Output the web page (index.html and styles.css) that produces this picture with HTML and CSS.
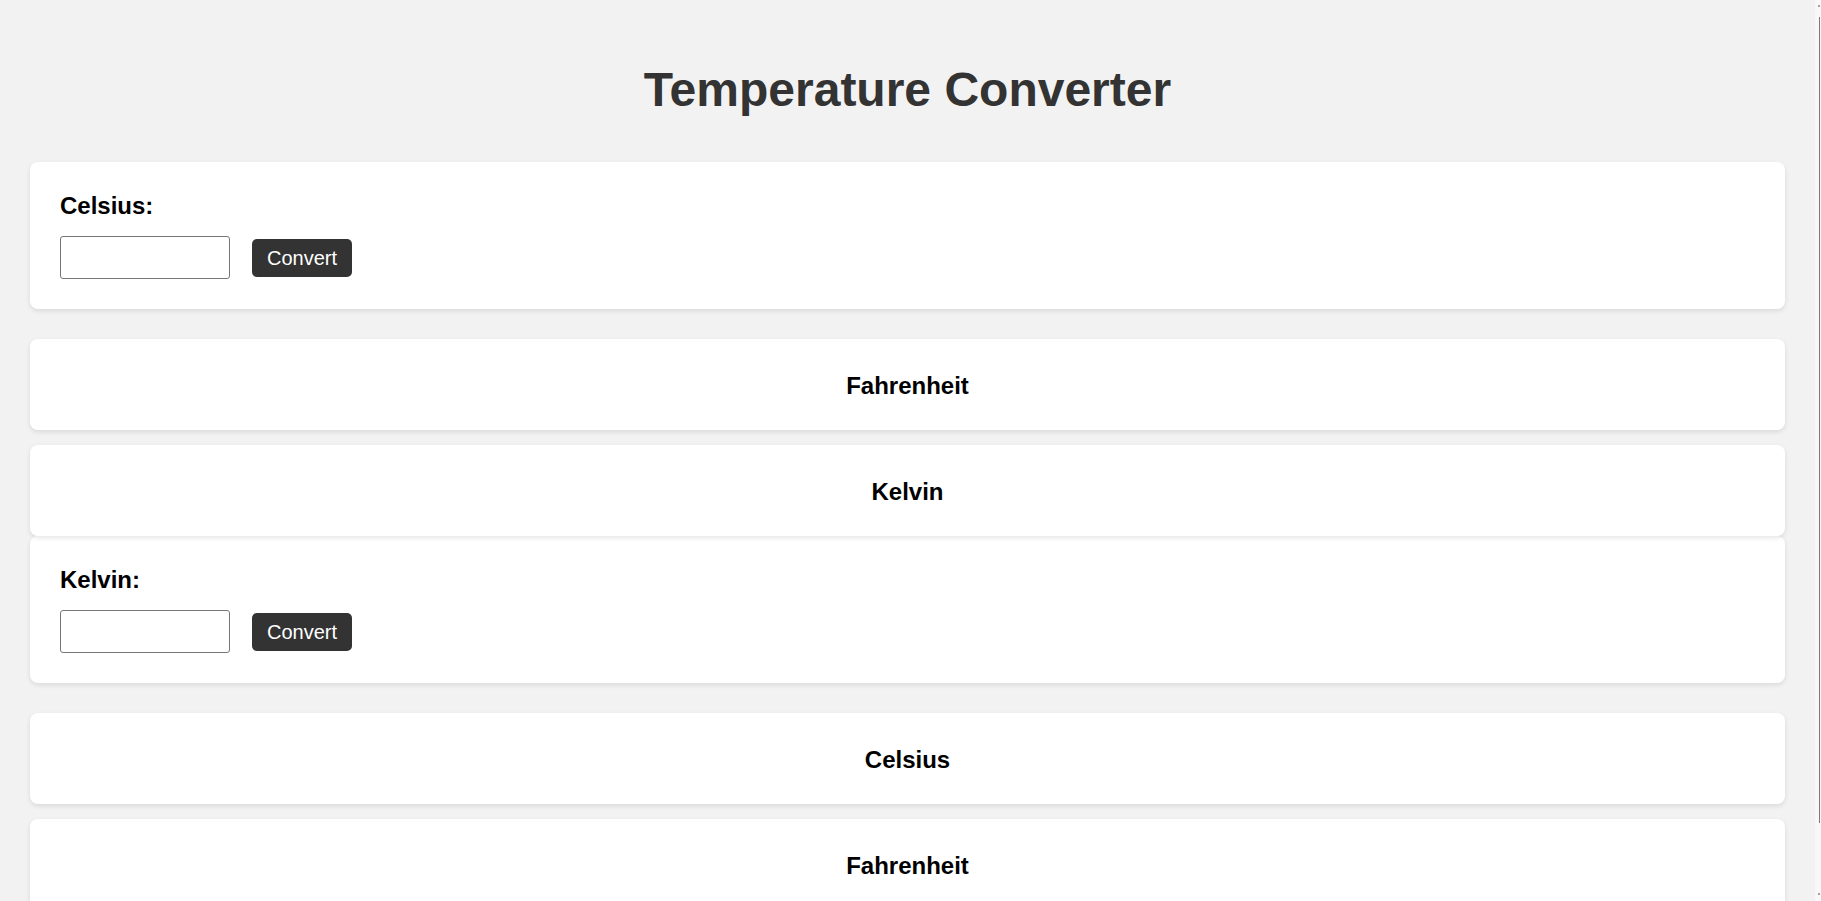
FILE: index.html
```html
<!DOCTYPE html>
<html lang="en">
<head>
<meta charset="utf-8">
<title>Temperature Converter</title>
<link rel="stylesheet" href="styles.css">
</head>
<body>
<main class="page">
  <h1 class="title">Temperature Converter</h1>

  <section class="group">
    <div class="card input-card">
      <label class="field-label" for="celsius">Celsius:</label>
      <div class="row">
        <input class="num-input" id="celsius" type="text">
        <button class="convert-btn" type="button">Convert</button>
      </div>
    </div>
    <div class="results">
      <div class="card result-card">Fahrenheit</div>
      <div class="card result-card">Kelvin</div>
    </div>
  </section>

  <section class="group">
    <div class="card input-card">
      <label class="field-label" for="kelvin">Kelvin:</label>
      <div class="row">
        <input class="num-input" id="kelvin" type="text">
        <button class="convert-btn" type="button">Convert</button>
      </div>
    </div>
    <div class="results">
      <div class="card result-card">Celsius</div>
      <div class="card result-card">Fahrenheit</div>
    </div>
  </section>
</main>
<div class="scrollbar" aria-hidden="true">
  <span class="scroll-arrow scroll-arrow-up"></span>
  <span class="scroll-thumb"></span>
  <span class="scroll-arrow scroll-arrow-down"></span>
</div>
</body>
</html>
```

FILE: styles.css
```css
body {
  margin: 0;
  padding-right: 6px;
  background: #f2f2f2;
  font-family: "Liberation Sans", Arial, Helvetica, sans-serif;
  color: #000;
}

.page {
  padding: 0 30px 60px;
}

.title {
  margin: 62px 0 45px;
  font-size: 48px;
  line-height: 55px;
  font-weight: bold;
  text-align: center;
  color: #333;
}

.card {
  background: #fff;
  border-radius: 8px;
  box-shadow: 0 2px 5px rgba(0, 0, 0, 0.1);
}

.input-card {
  padding: 30px;
  margin-bottom: 30px;
}

.field-label {
  display: block;
  margin-bottom: 16px;
  font-size: 24px;
  line-height: 28px;
  font-weight: bold;
}

.row {
  display: flex;
  align-items: center;
  gap: 22px;
}

.num-input {
  box-sizing: border-box;
  width: 170px;
  height: 43px;
  margin: 0;
  padding: 8px 10px;
  border: 1px solid #767676;
  border-radius: 3px;
  background: #fff;
  font-family: inherit;
  font-size: 20px;
}

.convert-btn {
  box-sizing: border-box;
  height: 38px;
  margin: 0;
  padding: 0 15px;
  border: none;
  border-radius: 5px;
  background: #333;
  color: #fff;
  font-family: inherit;
  font-size: 20px;
  line-height: 38px;
}

.results {
  display: flex;
  flex-direction: column;
  gap: 15px;
}

.result-card {
  padding: 31px 30px 29px;
  font-size: 24px;
  line-height: 31px;
  font-weight: bold;
  text-align: center;
}

/* thin scrollbar drawn over the right edge of the window */
.scrollbar {
  position: fixed;
  top: 0;
  right: 0;
  bottom: 0;
  width: 6px;
  background: #f8f8f8;
}

.scroll-thumb {
  position: absolute;
  top: 17px;
  bottom: 78px;
  right: 1px;
  width: 1px;
  background: #7a7a7a;
}

.scroll-arrow {
  position: absolute;
  right: 1px;
  width: 2px;
  height: 2px;
  background: #a0a0a0;
}

.scroll-arrow-up {
  top: 5px;
}

.scroll-arrow-down {
  bottom: 6px;
}
```
